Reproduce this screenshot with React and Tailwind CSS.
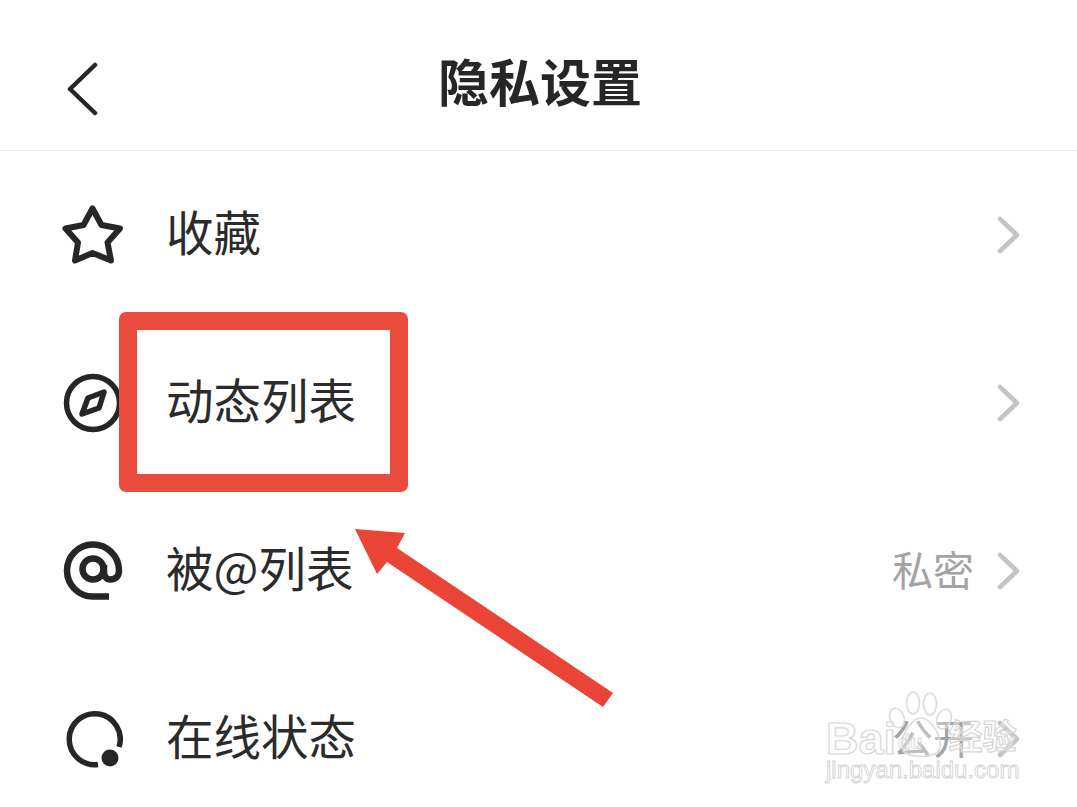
import React from "react";

const Chevron = () => (
  <svg width="24" height="38" viewBox="0 0 24 38" fill="none" className="shrink-0">
    <path d="M3 3 L20 19 L3 35" stroke="#c4c4c4" strokeWidth="4.5" strokeLinecap="round" strokeLinejoin="round" />
  </svg>
);

const Star = () => (
  <svg width="64" height="60" viewBox="0 0 64 60" fill="none" className="shrink-0 translate-x-[1px]">
    <path d="M30.5 3.5 L39.5 20 L58 23.5 L45.5 37.5 L49 55.5 L30.5 48 L13 55.5 L16 37.5 L3.5 23.5 L21.5 20 Z" stroke="#262626" strokeWidth="6" strokeLinejoin="round" />
  </svg>
);

const Compass = () => (
  <svg width="60" height="60" viewBox="0 0 60 60" fill="none" className="shrink-0">
    <circle cx="30" cy="30" r="26.5" stroke="#262626" strokeWidth="5.5" />
    <path d="M41 19 L36 35 L19 41 L25 25 Z" stroke="#262626" strokeWidth="5.5" strokeLinejoin="round" />
  </svg>
);

const At = () => (
  <svg width="60" height="60" viewBox="0 0 60 60" fill="none" className="shrink-0">
    <circle cx="30" cy="28" r="10.5" stroke="#262626" strokeWidth="6.5" />
    <path d="M46 55.5 H30 A26 26 0 1 1 56 29 C56 36 52 38.5 47.5 38.5 C43 38.5 41 35 41 31 V24" stroke="#262626" strokeWidth="6.5" />
  </svg>
);

const Online = () => (
  <svg width="60" height="60" viewBox="0 0 60 60" fill="none" className="shrink-0">
    <path d="M35 55.5 A25.5 25.5 0 1 1 56 38" stroke="#262626" strokeWidth="5.5" />
    <circle cx="47" cy="49" r="8.5" fill="#262626" />
  </svg>
);

const rows = [
  { icon: <Star />, label: "收藏", value: "" },
  { icon: <Compass />, label: "动态列表", value: "" },
  { icon: <At />, label: "被@列表", value: "私密" },
  { icon: <Online />, label: "在线状态", value: "公开" },
];

export default function App() {
  return (
    <div
      className="relative w-[1077px] h-[807px] overflow-hidden bg-[#fefefe] text-[#262626]"
      style={{ fontFamily: '"Noto Sans CJK SC", "Noto Sans", sans-serif' }}
    >
      <header className="flex items-center h-[151px] border-b border-[#ececec] pl-[65px]">
        <svg width="36" height="54" viewBox="0 0 36 54" fill="none" className="shrink-0 mt-[27px]">
          <path d="M30 3 L5 27 L30 51" stroke="#262626" strokeWidth="4.5" strokeLinecap="round" strokeLinejoin="round" />
        </svg>
        <h1 className="ml-[337px] text-[51px] leading-none font-bold pt-[11px]">隐私设置</h1>
      </header>

      <ul className="flex flex-col">
        {rows.map((r) => (
          <li key={r.label} className="flex items-center h-[168px] shrink-0 pl-[63px] pr-[56px]">
            <span className="w-[60px] h-[60px] flex items-center justify-center shrink-0">{r.icon}</span>
            <span className="ml-[43px] text-[47.5px] leading-none text-[#2b2b2b] pb-[8px]">{r.label}</span>
            <span className="ml-auto text-[41px] leading-none text-[#a3a3a3] mr-[23px] pb-[5px]">{r.value}</span>
            <Chevron />
          </li>
        ))}
      </ul>

      {/* annotation box */}
      <div className="absolute left-[119px] top-[312px] w-[289px] h-[180px] border-[18px] border-[#e94b3c] rounded-[7px]" />

      {/* annotation arrow */}
      <svg width="1077" height="807" viewBox="0 0 1077 807" className="absolute left-0 top-0 pointer-events-none">
        <polygon points="355,529 405,533 397,548 613,693 603,707 387,562 377,574" fill="#e94435" />
      </svg>

      {/* watermark */}
      <div className="absolute left-[826px] top-[690px] w-[200px] h-[100px] pt-[26px] pointer-events-none">
        <svg width="80" height="72" viewBox="0 0 80 72" fill="none" className="absolute left-[58px] top-0">
          <g stroke="#dcdcdc" strokeWidth="1.6" fill="#ffffff" fillOpacity="0.3">
            <ellipse cx="13" cy="28" rx="7" ry="10" transform="rotate(-20 13 28)" />
            <ellipse cx="29" cy="13" rx="6.5" ry="11" />
            <ellipse cx="46" cy="14" rx="6.5" ry="11" />
            <ellipse cx="60" cy="29" rx="7" ry="10" transform="rotate(20 60 29)" />
            <path d="M37 28 C48 28 62 52 54 62 C46 68 28 68 20 62 C12 52 26 28 37 28 Z" />
          </g>
        </svg>
        <div className="relative flex items-start">
          <span
            className="text-[45px] leading-none font-bold text-white/30 [-webkit-text-stroke:1.2px_#d6d6d6]"
            style={{ fontFamily: '"Liberation Sans", sans-serif' }}
          >
            Bai
          </span>
          <span
            className="ml-[2px] mt-[16px] text-[20px] leading-none font-bold text-white/30 [-webkit-text-stroke:0.8px_#d6d6d6]"
            style={{ fontFamily: '"Liberation Sans", sans-serif' }}
          >
            du
          </span>
          <span className="ml-[26px] mt-[2px] text-[34px] leading-none font-bold text-white/40 [-webkit-text-stroke:1.2px_#d6d6d6]">
            经验
          </span>
        </div>
        <p
          className="relative -mt-[3px] text-[24px] leading-none text-transparent [-webkit-text-stroke:0.8px_#cfcfcf]"
          style={{ fontFamily: '"Liberation Sans", sans-serif' }}
        >
          jingyan.baidu.com
        </p>
      </div>
    </div>
  );
}
